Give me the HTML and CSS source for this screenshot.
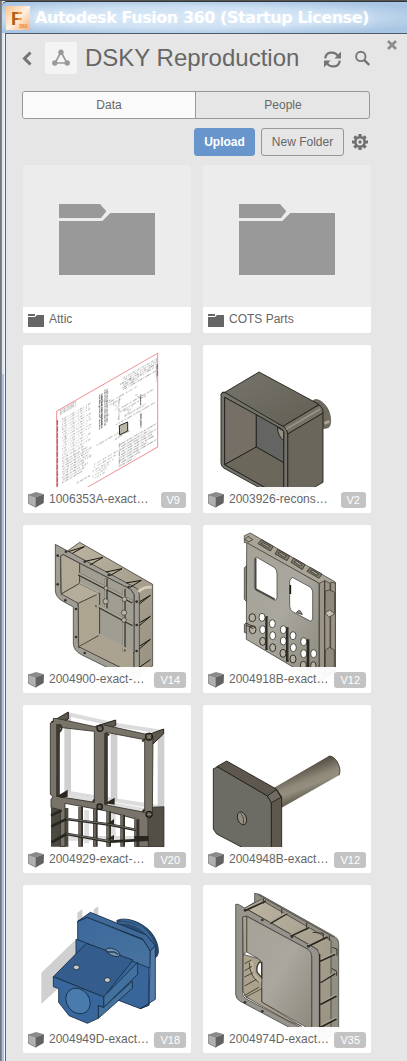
FILE: index.html
```
<!DOCTYPE html>
<html lang="en">
<head>
<meta charset="utf-8">
<title>Autodesk Fusion 360 (Startup License)</title>
<link rel="stylesheet" href="styles.css">
</head>
<body>
<svg class="defs" width="0" height="0" aria-hidden="true">
  <defs>
    <linearGradient id="steel" x1="0" y1="0" x2="1" y2="1"><stop offset="0" stop-color="#77756c"/><stop offset="1" stop-color="#625e54"/></linearGradient>
    <linearGradient id="stone" x1="0" y1="0" x2="1" y2="1"><stop offset="0" stop-color="#a5a297"/><stop offset=".5" stop-color="#a9a79e"/><stop offset="1" stop-color="#8c897d"/></linearGradient>
    <linearGradient id="sand" x1="0" y1="0" x2="1" y2="1"><stop offset="0" stop-color="#bdb5a2"/><stop offset="1" stop-color="#989080"/></linearGradient>
    <linearGradient id="rod" x1=".3" y1=".2" x2=".62" y2=".85"><stop offset=".1" stop-color="#554f44"/><stop offset=".45" stop-color="#8e887a"/><stop offset=".6" stop-color="#958f80"/><stop offset=".9" stop-color="#5c574b"/></linearGradient>
    <linearGradient id="blue" x1="0" y1="0" x2="1" y2="1"><stop offset="0" stop-color="#3d689c"/><stop offset="1" stop-color="#47749f"/></linearGradient>
    <filter id="ink" x="-5%" y="-5%" width="110%" height="110%"><feTurbulence type="fractalNoise" baseFrequency=".3" numOctaves="2" seed="4"/><feDisplacementMap in="SourceGraphic" scale="6" xChannelSelector="R" yChannelSelector="G"/></filter>
    <symbol id="cube" viewBox="0 0 48 48">
      <path d="M0 8 24 0 48 7 24 15z" fill="#8b8b8b"/><path d="M0 8 24 15V46L1 34z" fill="#b0b0b0" stroke="#777" stroke-width="2.5"/><path d="M24 15 48 7 47 33 24 46z" fill="#626262"/>
    </symbol>
    <symbol id="folder" viewBox="0 0 288 213">
      <path d="M0 0H123L142 22 126 42H0z"/><path d="M0 51H130L154 27H288V213H0z"/>
    </symbol>
    <symbol id="folder-small" viewBox="0 0 16 13">
      <path d="M0 0H7V2H0zM0 3H7L9 1H16V13H0z"/>
    </symbol>
  </defs>
</svg>
<div class="window">
  <header class="titlebar">
    <svg class="app-icon" viewBox="0 0 24 24">
      <defs><linearGradient id="ig" x1="0" y1="0" x2="1" y2="1"><stop offset="0" stop-color="#fbc38d"/><stop offset=".5" stop-color="#fff0df"/><stop offset="1" stop-color="#f7b07d"/></linearGradient><linearGradient id="fg" x1="0" y1="0" x2="1" y2="0"><stop offset="0" stop-color="#a35514"/><stop offset=".4" stop-color="#c56a1b"/><stop offset=".45" stop-color="#e9983d"/></linearGradient></defs>
      <rect width="24" height="24" fill="url(#ig)"/>
      <text><tspan class="icon-f" x="5" y="18.5">F</tspan><tspan class="icon-360" x="13" y="22">360</tspan></text>
    </svg>
    <h1 class="window-title">Autodesk Fusion 360 (Startup License)</h1>
  </header>
  <main class="panel">
    <div class="heading">
      <svg class="back" viewBox="0 0 10 16"><path d="M8.5 1.5 2.5 7.5 8.5 13.5" fill="none" stroke="#747474" stroke-width="3"/></svg>
      <span class="project-icon"><svg viewBox="0 0 18 18"><path d="M9 3 3 14H15z" fill="none" stroke="#999" stroke-width="1.6"/><g fill="#999"><circle cx="9" cy="3.2" r="2.7"/><circle cx="2.8" cy="14" r="2.7"/><circle cx="15.2" cy="14" r="2.7"/></g></svg></span>
      <h2 class="project-name">DSKY Reproduction</h2>
      <svg class="refresh" viewBox="0 0 16 16"><g fill="none" stroke="#747474" stroke-width="2.1"><path d="M1.2 7C1.6 1 9.5-.6 13.4 4.6M14.8 9C14.4 15 6.5 16.6 2.6 11.4"/></g><g fill="#747474"><path d="M16 .5V7H9.8zM0 15.5V9H6.2z"/></g></svg>
      <svg class="search" viewBox="0 0 15 15"><circle cx="5.8" cy="5.5" r="4.7" fill="none" stroke="#747474" stroke-width="1.8"/><path d="M9 8.8 14.2 14" stroke="#747474" stroke-width="2.4"/></svg>
      <svg class="close" viewBox="0 0 10 10"><path d="M1 1 9 9M9 1 1 9" stroke="#8d8d8d" stroke-width="2.8"/></svg>
    </div>
    <nav class="tabs"><span class="tab active">Data</span><span class="tab">People</span></nav>
    <div class="actions">
      <button class="btn primary">Upload</button><button class="btn">New Folder</button>
      <svg class="gear" viewBox="-8 -8 16 16"><circle r="4.7" fill="none" stroke="#707070" stroke-width="2.6"/><circle r="1.7" fill="#707070"/><path d="M0-8V-5M0 5V8M-8 0H-5M5 0H8M-5.6-5.6-3.7-3.7M5.6-5.6 3.7-3.7M-5.6 5.6-3.7 3.7M5.6 5.6 3.7 3.7" stroke="#707070" stroke-width="3.2"/></svg>
    </div>
    <section class="grid">
      <article class="card folder"><div class="preview"><svg class="folder-large"><use href="#folder"/></svg></div><footer class="label"><svg class="kind-folder"><use href="#folder-small"/></svg><span class="name">Attic</span></footer></article>
      <article class="card folder"><div class="preview"><svg class="folder-large"><use href="#folder"/></svg></div><footer class="label"><svg class="kind-folder"><use href="#folder-small"/></svg><span class="name">COTS Parts</span></footer></article>

      <article class="card">
        <svg class="thumb" viewBox="24 15 504 504">
          <g class="sheet" transform="matrix(1 -.575 0 1 125 214)">
            <g fill="none" stroke="#505050" stroke-width="2" opacity=".75" filter="url(#ink)">
              <path d="M10 5H58M10 10H54M10 15H58" stroke-dasharray="5 2 2 2"/>
              <path d="M16 34H105M16 41H96M16 49H105M16 57H88M18 65H105M16 73H99M18 81H105M16 89H90M18 98H105M16 106H104M18 114H84M16 123H105M18 132H95M16 141H105" stroke-dasharray="3 3 7 4 2 5" stroke-width="1.9"/>
              <path d="M16 150H80M16 160H92M18 168H104M16 176H98M18 184H95M16 192H106M18 200H83M16 208H94M18 216H88M16 224H76M60 250H100" stroke-dasharray="4 2 2 3 8 4" stroke-width="2.2"/>
              <path d="M190 29H298M200 36H292M196 43H245M200 50H298" stroke-dasharray="3 2 8 3 2 4" stroke-width="2.5"/>
              <path d="M200 15H297M205 22H298" stroke-dasharray="6 3 2 3"/>
              <path d="M129 24V129M136 24V127M145 18V126M151 20V120" stroke-dasharray="3 2 7 2" stroke-width="3.5"/>
              <path d="M187 73V135M188 205V276M251 92V122M252 149V194M300 12V82M2 28V226" stroke-dasharray="15 3 3 2"/>
              <path d="M155 64H242M160 73H195M193 101H290M190 111H250M204 132H267M178 143H294M120 171H187M175 184H219" stroke-dasharray="5 3 14 4" stroke-width="1.8"/>
              <path d="M112 224H183M112 233H178M108 242H170M118 249H158M107 257H151M113 266H146" stroke-dasharray="3 5 6 3"/>
              <path d="M190 209H298M193 217H280M190 225H298M192 233H288M193 241H293M190 249H275M190 257H298M195 265H250M191 273H235" stroke-dasharray="4 2 8 3 2 2" stroke-width="2.4"/>
              <path d="M140 48 165 62M169 76 183 90 175 98M237 86 252 106 270 108M202 114 222 121 205 131" stroke-dasharray="5 4"/>
            </g>
            <path d="M0 0H303V281H0z" fill="none" stroke="#ee8f93" stroke-width="3"/>
          </g>
          <path d="M127 240V440M427 72V110M377 170V196M378 222V263M260 164V265" stroke="#555" stroke-width="2.5" stroke-dasharray="16 3"/>
          <path d="M313 257 338 246V273L314 285z" fill="#bcb6a7" stroke="#282820" stroke-width="3"/>
        </svg>
        <footer class="label"><svg class="kind"><use href="#cube"/></svg><span class="name">1006353A-exact…</span><span class="version">V9</span></footer>
      </article>

      <article class="card">
        <svg class="thumb" viewBox="24 15 504 504">
          <path d="M353 184C360 172 382 180 397 204 410 225 410 260 399 263L386 266 375 205z" fill="#6f6a5e" stroke="#55514a" stroke-width="2"/><path d="M388 250 403 244" stroke="#aaa392" fill="none" stroke-width="9"/>
          <g stroke="#191814" stroke-width="2.5" stroke-linejoin="round">
            <path d="M78 163Q80 154 91 156L192 96 372 193 264 259z" fill="url(#steel)"/>
            <path d="M264 259 372 195Q385 204 384 220L278 282Q275 265 264 259z" fill="#777267"/>
            <path d="M278 282 384 219V427L278 488z" fill="#6a665b"/>
            <path fill-rule="evenodd" d="M78 163Q80 155 91 158L263 259Q277 266 278 284V490L95 389Q78 382 78 368zM89 172V374L266 474V276L260 267z" fill="#73736b"/>
            <path d="M89 172 184 224V321L89 374z" fill="#756f65"/><path d="M184 224 260 267 266 276V368L184 321z" fill="#646563"/><path d="M89 374 184 321 266 368V474z" fill="#6c675b"/>
            <path d="M247 262Q249 289 266 302V273z" fill="#96917f"/>
          </g>
          <path d="M273 268 376 207" stroke="#aaa493" stroke-width="5" opacity=".65"/>
        </svg>
        <footer class="label"><svg class="kind"><use href="#cube"/></svg><span class="name">2003926-recons…</span><span class="version">V2</span></footer>
      </article>

      <article class="card">
        <svg class="thumb" viewBox="69 15 504 504">
          <g stroke="#28261f" stroke-width="2" stroke-linejoin="round">
            <path d="M201 94 239 67 458 193V438L418 462 410 207z" fill="url(#sand)"/>
            <path fill-rule="evenodd" d="M166 73 410 205Q418 210 418 224V490L244 404Q220 391 220 370V261L187 243Q166 231 166 210zM182 108V211Q182 222 191 222L226 242Q235 250 235 260V369Q235 379 245 383L402 462V224L392 208 190 104z" fill="#a09e94"/>
            <path d="M182 108 190 104 239 130V190L184 222z" fill="#b2aa97"/><path d="M184 222 239 190 299 220 235 250z" fill="#b5ad9b"/>
            <path d="M235 250 299 220V345L236 383z" fill="#aea591"/><path d="M236 380 299 345 401 398V462z" fill="#aba38f"/>
            <path d="M239 130 392 208 402 224V398L299 345V220L239 190z" fill="#a09d93"/>
          </g>
          <g stroke="#393730" stroke-width="10" fill="none"><path d="M236 162 398 246M287 254 399 314M318 175V265M372 207V394"/></g>
          <g stroke="#aaa597" stroke-width="6" fill="none"><path d="M236 160 398 244M287 252 399 312M316 175V265M370 207V394M239 188 293 215V342L399 397"/></g>
          <g fill="#b8b3a5" stroke="#35332b" stroke-width="2"><circle cx="317" cy="244" r="8"/><circle cx="372" cy="278" r="8"/><circle cx="373" cy="238" r="7"/><circle cx="318" cy="204" r="6"/><circle cx="372" cy="300" r="7"/></g>
          <g fill="none" stroke="#17150e" stroke-width="3"><path d="M205 95 253 80 217 100M255 124 309 112 270 135M318 156 366 146 330 167M378 189 424 181 390 202M418 252 451 226 419 245M418 317 451 289 419 308M418 387 451 358 419 378M418 442 451 419"/></g>
          <path d="M415 215Q434 198 455 202" stroke="#d7cfba" stroke-width="8" fill="none"/>
          <g fill="#33322c"><circle cx="173" cy="107" r="4"/><circle cx="173" cy="193" r="4"/><circle cx="196" cy="241" r="4"/><circle cx="228" cy="267" r="4"/><circle cx="228" cy="351" r="4"/><circle cx="254" cy="399" r="4"/><circle cx="410" cy="245" r="4"/><circle cx="410" cy="315" r="4"/><circle cx="410" cy="393" r="4"/><circle cx="198" cy="95" r="4"/><circle cx="254" cy="125" r="4"/><circle cx="326" cy="165" r="4"/><circle cx="386" cy="201" r="4"/></g>
        </svg>
        <footer class="label"><svg class="kind"><use href="#cube"/></svg><span class="name">2004900-exact-…</span><span class="version">V14</span></footer>
      </article>

      <article class="card">
        <svg class="thumb" viewBox="24 15 504 504">
          <g stroke="#302e27" stroke-width="2" stroke-linejoin="round">
            <path d="M155 137 148 143V238L155 245zM158 306 148 313V337L159 342z" fill="#918d81"/>
            <path fill-rule="evenodd" d="M155 65 373 190V488L154 358zM178 119 184 111 239 143Q246 150 246 162V234L241 241 183 211 178 201zM284 182 292 172 347 202 353 213V297L347 304 293 275Q284 269 284 257z" fill="url(#stone)"/>
            <path d="M148 47 166 39 421 186V455L373 488V190L155 68 148 68z" fill="#aaa496"/>
            <path d="M373 190 389 182V474L373 485zM389 182 405 190V464L389 474zM407 187 421 189V455L407 464z" fill="#9c9587"/>
            <path d="M391 213 404 210 419 217V278L403 289 390 278zM391 390 404 382 418 390V448L391 462z" fill="#8f897b"/><path d="M390 278 404 270 419 281 402 292z" fill="#c5bfb0"/>
          </g>
          <g fill="#7c786c" stroke="#22211b" stroke-width="2"><path d="M189 71 199 59 235 79 226 93zM240 102 248 88 284 108 276 122zM288 127 296 114 330 134 322 149zM336 154 345 142 381 162 372 175z"/></g>
          <g fill="#aaa599" stroke="#22211b" stroke-width="2"><path d="M199 71 204 68 225 79 220 83zM249 99 254 96 274 108 269 112zM298 126 303 122 321 134 316 138zM346 153 351 150 371 162 366 166zM150 59 162 66 173 59 159 49z"/></g>
          <path d="M182 114V207L239 238" stroke="#49463e" stroke-width="5" fill="none"/><path d="M286 195V222" stroke="#191813" stroke-width="5"/><path d="M304 278Q315 262 322 284z" fill="#8f8b7e" stroke="#24231e" stroke-width="2"/>
          <g fill="#fff" stroke="#33312b" stroke-width="2.5"><ellipse cx="201" cy="292" rx="9" ry="12"/><ellipse cx="232" cy="311" rx="9" ry="12"/><ellipse cx="203" cy="329" rx="9" ry="12"/><ellipse cx="233" cy="347" rx="9" ry="12"/><ellipse cx="265" cy="329" rx="9" ry="12"/><ellipse cx="294" cy="347" rx="9" ry="12"/><ellipse cx="265" cy="363" rx="9" ry="12"/><ellipse cx="295" cy="383" rx="9" ry="12"/><ellipse cx="326" cy="365" rx="9" ry="12"/><ellipse cx="356" cy="401" rx="9" ry="12"/><ellipse cx="326" cy="401" rx="9" ry="12"/></g>
          <g fill="#b7b1a3" stroke="#33312b" stroke-width="3"><ellipse cx="172" cy="293" rx="10" ry="12"/><ellipse cx="173" cy="329" rx="10" ry="12"/><ellipse cx="203" cy="364" rx="9" ry="12"/><ellipse cx="233" cy="383" rx="9" ry="12"/><ellipse cx="264" cy="400" rx="9" ry="12"/><ellipse cx="294" cy="417" rx="9" ry="12"/><ellipse cx="325" cy="435" rx="9" ry="11"/><ellipse cx="355" cy="437" rx="8" ry="12"/></g>
          <path d="M215 289V390M277 322V425M339 358V454" stroke="#29271f" stroke-width="8"/><path d="M218 292V388M280 325V420" stroke="#706d62" stroke-width="3"/><path d="M153 309 181 323M155 316 175 326" stroke="#35332b" stroke-width="3"/>
        </svg>
        <footer class="label"><svg class="kind"><use href="#cube"/></svg><span class="name">2004918B-exact…</span><span class="version">V12</span></footer>
      </article>

      <article class="card">
        <svg class="thumb" viewBox="69 15 504 504">
          <path d="M201 42 350 75 489 96M202 278 488 323" fill="none" stroke="#dcdcdc" stroke-width="12"/><path d="M203 42V278M342 68V302M483 96V325" stroke="#cfcfcf" stroke-width="20"/>
          <path d="M200 290 482 340M205 415H430M260 330V430M340 335V430" stroke="#dedede" stroke-width="14" fill="none"/>
          <path d="M153 324H205V440H153z" fill="#4c4941"/><path d="M445 322 492 320V441H445z" fill="#534f47" stroke="#29261f" stroke-width="2"/>
          <path d="M154 66 205 36V57L184 66zM287 79 347 60V76L307 94zM437 107 491 87V101L457 134z" fill="#5f5a50" stroke="#25231d" stroke-width="3"/>
          <path fill-rule="evenodd" d="M151 69 160 66V55L174 56 289 81 303 73 435 102 451 99 459 109 457 348 443 354 445 440H404V356L314 332 195 310V440H181V330L153 322V298Q163 290 151 283zM178 82 170 289 283 307V94zM318 97 314 314 434 337V119z" fill="#79746a" stroke="#302e27" stroke-width="2.5"/>
          <path d="M174 72V290M318 100V314" stroke="#3c3932" stroke-width="11"/><path d="M178 74Q191 80 179 96M435 116 427 125M317 100 328 105M427 336 434 328M278 306 284 298" stroke="#37342c" stroke-width="6" fill="none"/>
          <g fill="none" stroke="#34312b" stroke-width="14"><path d="M242 320V440M286 326V440M326 334V440M368 344V440M411 358V440"/></g><g fill="none" stroke="#6e695e" stroke-width="7"><path d="M240 320V440M284 326V440M324 334V440M366 344V440M406 350V440"/></g>
          <g fill="none" stroke="#282620" stroke-width="8"><path d="M154 379 199 357 330 374 408 390M155 427 199 402 330 425 446 419M403 412H446M153 347 185 331"/></g><path d="M199 356 330 373 408 389M199 401 330 424" stroke="#79746a" stroke-width="3" fill="none"/>
          <g fill="#2a2721"><path d="M171 289 203 269V290L187 294zM315 310 344 293V314zM320 373 342 357V373zM320 417 342 405V420z"/></g>
          <g fill="#5e594f" stroke="#1e1c17" stroke-width="4"><circle cx="300" cy="85" r="9"/><circle cx="447" cy="110" r="10"/><circle cx="299" cy="320" r="8"/><circle cx="447" cy="343" r="9"/></g><path d="M442 104 452 116M453 104 441 116M294 80 305 91M443 343H455" stroke="#aaa499" stroke-width="2"/>
        </svg>
        <footer class="label"><svg class="kind"><use href="#cube"/></svg><span class="name">2004929-exact-…</span><span class="version">V20</span></footer>
      </article>

      <article class="card">
        <svg class="thumb" viewBox="24 15 504 504">
          <path d="M237 263 400 169Q412 165 426 184 440 209 432 226L260 323z" fill="url(#rod)"/><path d="M400 169Q412 165 426 184 440 209 432 226" fill="none" stroke="#383529" stroke-width="2.5"/>
          <g stroke="#1c1b17" stroke-width="2.5" stroke-linejoin="round">
            <path d="M65 200 95 183 244 267 260 291V468L229 488V306L217 288z" fill="#5d574d"/>
            <path d="M55 206 68 201 217 288 229 308V488L65 402 55 387z" fill="#6c6c65"/>
            <path d="M217 288 244 269 258 292 229 308z" fill="#706c62"/><ellipse cx="141" cy="355" rx="13" ry="20" transform="rotate(-20 141 355)" fill="#928d80"/>
          </g><path d="M137 340Q148 352 145 371" stroke="#4b473e" stroke-width="3" fill="none"/>
        </svg>
        <footer class="label"><svg class="kind"><use href="#cube"/></svg><span class="name">2004948B-exact…</span><span class="version">V12</span></footer>
      </article>

      <article class="card">
        <svg class="thumb" viewBox="69 15 504 504">
          <path d="M124 278 228 178V276L124 372zM232 98 247 88V117L232 126zM281 88 295 79V105H281z" fill="#d0d0d0"/>
          <g stroke="#172b42" stroke-width="2.5" stroke-linejoin="round">
            <path d="M350 122C370 110 422 121 453 157 480 190 480 230 465 233L390 220z" fill="#294c73"/><path d="M353 130C384 121 430 142 451 176M363 120C402 116 452 152 464 202" stroke="#3e6997" stroke-width="4" fill="none"/>
            <path d="M228 178 447 240V376L421 386 350 359 228 260z" fill="#39669a"/>
            <path d="M233 124 262 112 430 180 451 213V265L233 179z" fill="url(#blue)"/><path d="M233 124 271 97 439 165 466 197 451 213 428 177 262 112z" fill="#3e6999"/>
            <path d="M451 213 466 197V358L421 386 447 374z" fill="#537caa"/>
            <path d="M160 290 259 190 399 240 311 351z" fill="#345c8d"/><path d="M311 351 413 247V283L311 382z" fill="#42709f"/><path d="M295 376 311 382 397 304V325L295 415z" fill="#44729f"/>
            <path d="M160 290 311 351V382L295 376V415L262 430 207 407 176 367V326L160 320z" fill="#38679d"/>
            <ellipse cx="234" cy="363" rx="34" ry="41" transform="rotate(-38 234 363)" fill="#497cad"/><ellipse cx="339" cy="217" rx="22" ry="10" transform="rotate(23 339 217)" fill="#7797b6"/>
            <ellipse cx="229" cy="262" rx="9" ry="7" fill="#cacbc8"/><ellipse cx="322" cy="300" rx="9" ry="7" fill="#cacbc8"/>
          </g><path d="M320 216H342L355 223" stroke="#243a51" stroke-width="4" fill="none"/>
        </svg>
        <footer class="label"><svg class="kind"><use href="#cube"/></svg><span class="name">2004949D-exact…</span><span class="version">V18</span></footer>
      </article>

      <article class="card">
        <svg class="thumb" viewBox="24 15 504 504">
          <g stroke="#302e28" stroke-width="2" stroke-linejoin="round">
            <path d="M179 40 194 43 420 170Q431 177 431 190V458L390 478 367 206 150 84 179 67z" fill="#918e84"/>
            <path d="M150 84 197 59 408 181V464L367 490V208z" fill="url(#sand)"/>
            <path fill-rule="evenodd" d="M122 73 130 73 357 203Q373 212 373 228V490L134 363Q122 355 122 342zM143 112V337Q143 352 156 358L350 460V228L339 208 157 109z" fill="#96948c"/>
            <path d="M155 109 339 208Q350 216 350 229V451L200 366V246L188 235 155 216z" fill="url(#stone)"/>
            <path d="M143 111 155 108V216L145 223zM145 223 187 235 200 246V366L153 352 144 334z" fill="#aba28e"/><path d="M153 351 200 326V366L320 439 279 422z" fill="#aaa18e"/>
          </g>
          <path d="M194 246Q182 259 187 278L200 292V248z" fill="#fff" stroke="#3c3930" stroke-width="4"/><path d="M171 244Q167 289 198 304" fill="none" stroke="#bdb39e" stroke-width="9"/><path d="M149 251 169 240M149 272 171 259M148 291 175 278M149 318 184 298M148 347 191 322M163 248Q163 286 191 307" fill="none" stroke="#34322a" stroke-width="2.5"/>
          <g fill="none" stroke="#26241c" stroke-width="7"><path d="M150 91 212 62M225 130 276 100M286 168 341 142M337 199 397 170"/><path d="M375 243 420 222M376 307 420 280M376 373 424 347M376 441 424 416"/></g>
          <g fill="none" stroke="#aaa597" stroke-width="4"><path d="M151 87 211 59M224 127 276 97M286 165 340 139M338 195 395 167"/><path d="M376 239 421 218M376 304 421 276M376 369 424 343M376 437 424 412"/></g>
          <path d="M374 222V455" stroke="#2d2b24" stroke-width="4"/><path d="M190 45 417 172" stroke="#57544b" stroke-width="3"/><path d="M205 55V71M260 86V101M335 127V150M353 157 385 160V178M403 166V182M412 202 426 207V227M410 265 425 274V287" stroke="#39362d" stroke-width="3" fill="none"/>
          <g fill="#34332d"><circle cx="150" cy="91" r="4"/><circle cx="202" cy="120" r="4"/><circle cx="291" cy="171" r="4"/><circle cx="340" cy="199" r="4"/><circle cx="150" cy="367" r="4"/><circle cx="202" cy="394" r="4"/></g>
        </svg>
        <footer class="label"><svg class="kind"><use href="#cube"/></svg><span class="name">2004974D-exact…</span><span class="version">V35</span></footer>
      </article>
    </section>
  </main>
</div>
</body>
</html>
```

FILE: styles.css
```
* { box-sizing: border-box; }
body { margin: 0; background: #777; font-family: "Liberation Sans", Arial, sans-serif; color: #666; }
.defs { display: block; }
.window { width: 407px; height: 1061px; overflow: hidden; padding-left: 2px; background: linear-gradient(90deg, #777 0 1px, #868686 1px 2px, transparent 2px 4px, #edf5ff 4px), linear-gradient(#dbe8f6 0 373px, #a9c6e8 373px); border-top: 1px solid #555; }
.titlebar { height: 32px; display: flex; align-items: flex-start; padding: 4px 0 0 4px; border-top: 1px solid #333; border-radius: 5px 0 0; background: radial-gradient(ellipse at 45% 50%, #d3e4f5 0, #cbdff2 48%, #a8c5e3 85%, #a8c7e7); }
.app-icon { width: 24px; height: 24px; flex: none; }
.icon-f { font: bold 19px "Liberation Sans", sans-serif; fill: url(#fg); }
.icon-360 { font: bold 5px "Liberation Sans", sans-serif; fill: #e48531; }
.window-title { margin: 2px 0 0 5px; font: bold 16px/20px "DejaVu Sans", Verdana, sans-serif; letter-spacing: -.44px; color: #fff; white-space: nowrap; text-shadow: 0 0 8px #eaf4ff; }
.panel { margin-left: 3px; height: 1028px; background: #e6e6e6; border-left: 1px solid #58667a; border-top: 1px solid #4f5a69; padding: 8px 0 0 16px; }
.heading { display: flex; align-items: flex-start; height: 49px; position: relative; }
.back { width: 10px; height: 16px; margin-top: 9px; }
.project-icon { width: 32px; height: 32px; margin-left: 13px; border-radius: 3px; background: #f4f4f4; display: grid; place-items: center; }
.project-icon svg { width: 18px; height: 18px; }
.project-name { margin: 1px 0 0 8px; width: 239px; font-size: 24px; line-height: 30px; font-weight: 400; white-space: nowrap; }
.refresh { width: 17px; height: 17px; margin-top: 9px; }
.search { width: 15px; height: 15px; margin: 9px 0 0 14px; }
.close { position: absolute; left: 365px; top: -2px; width: 10px; height: 10px; }
.tabs { display: grid; grid-template-columns: 173px 174px; width: 348px; height: 28px; border: 1px solid #989898; border-radius: 3px; overflow: hidden; font-size: 12px; line-height: 26px; text-align: center; }
.tab.active { background: #fafafa; border-right: 1px solid #989898; }
.actions { height: 46px; width: 347px; display: flex; justify-content: flex-end; padding-top: 9px; }
.btn { height: 28px; width: 83px; padding: 0; border: 1px solid #989898; border-radius: 3px; background: transparent; color: #666; font: 12px "Liberation Sans", Arial, sans-serif; }
.btn.primary { width: 61px; margin-right: 6px; border-color: #6896cc; background: #6896cc; color: #fff; font-weight: 700; }
.gear { width: 16px; height: 16px; margin: 6px 1px 0 8px; }
.grid { display: grid; grid-template-columns: 168px 168px; gap: 12px; padding-left: 1px; }
.card { height: 168px; background: #fff; border-radius: 2px; overflow: hidden; position: relative; display: flex; flex-direction: column; justify-content: flex-end; }
.folder { background: #ececec; }
.preview { height: 142px; padding: 39px 36px; }
.folder-large { display: block; width: 96px; height: 71px; fill: #999; }
.thumb { position: absolute; inset: 0; width: 168px; height: 168px; }
.label { position: relative; height: 26px; flex: none; display: flex; align-items: flex-start; padding: 5px 5px 0; background: rgba(255,255,255,.96); font-size: 12px; line-height: 14px; }
.kind { width: 16px; height: 16px; flex: none; }
.kind-folder { width: 16px; height: 13px; margin-top: 2px; flex: none; fill: #666; }
.name { margin-left: 5px; flex: 1; white-space: nowrap; }
.version { height: 16px; padding: 0 6px; border-radius: 3px; background: #c3c3c3; color: #fff; font: 11px/16px "Liberation Sans", Arial, sans-serif; }
```
